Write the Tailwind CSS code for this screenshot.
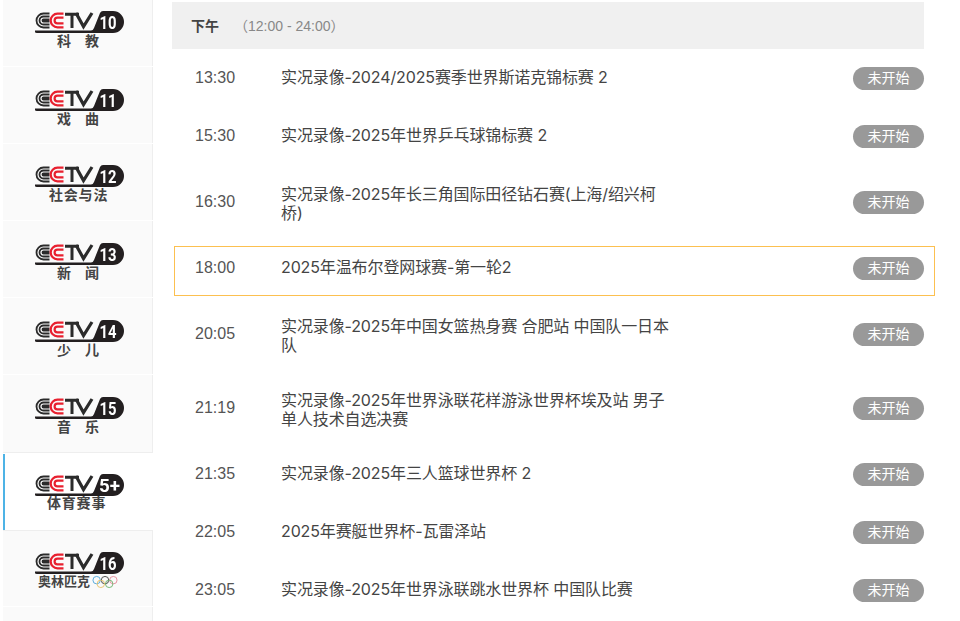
<!doctype html>
<html>
<head>
  <meta charset="UTF-8">
  <meta name="viewport" content="width=device-width, initial-scale=1.0">
  <script src="https://cdn.jsdelivr.net/npm/@tailwindcss/browser@4"></script>
  <title>CCTV 节目单</title>
</head>
<body class="bg-white font-['Liberation_Sans','Noto_Sans_CJK_SC',sans-serif]">
  <svg class="hidden" width="0" height="0">
    <symbol id="cctv" viewBox="0 0 90 22">
      <g fill="none" stroke="#2b2b2b" stroke-width="1.8">
        <path d="M14.5 2.5H8.5A7 7 0 0 0 8.5 16.5H14.5"/>
        <path d="M14.5 5.5H8.5A4 4 0 0 0 8.5 13.5H14.5"/>
        <path d="M14.5 8.5H8.5A1 1 0 0 0 8.5 10.5H14.5"/>
      </g>
      <g fill="none" stroke="#e8202f" stroke-width="2.2">
        <path d="M28.5 2.7H22.5A6.8 6.8 0 0 0 22.5 16.3H28.5"/>
        <path d="M28.5 6.6H22.5A2.9 2.9 0 0 0 22.5 12.4H28.5"/>
      </g>
      <path d="M30 3.2H44M37 3.2V17" fill="none" stroke="#2b2b2b" stroke-width="3"/>
      <path d="M41 2L48.5 15.5L57 2" fill="none" stroke="#2b2b2b" stroke-width="3.2"/>
      <path d="M0 19.5H56Q58 19.5 59 17L65 2Q66 0 68 0H78A11 11 0 0 1 78 22H2Q0 22 0 21Z" fill="#231f20"/>
    </symbol>
  </svg>

  <div class="flex h-[621px] w-[960px] overflow-hidden">
    <!-- channel list -->
    <aside class="-mt-[10px] ml-[3px] w-[150px] shrink-0 text-[#444]">
      <a class="mb-px block h-[76px] border-r border-[#eee] bg-[#fafafa] pt-[21px]">
        <svg class="ml-[32px] block h-[22px] w-[90px] blur-[.3px]"><use href="#cctv"/><text x="73" y="17.5" text-anchor="middle" fill="#fff" font-size="18" font-weight="700" font-family="Roboto" textLength="17" lengthAdjust="spacingAndGlyphs">10</text></svg>
        <p class="mt-px ml-[54px] flex gap-[14px] text-[14px] leading-[15px] font-bold"><span>科</span><span>教</span></p>
      </a>
      <a class="mb-px block h-[76px] border-r border-[#eee] bg-[#fafafa] pt-[22px]">
        <svg class="ml-[32px] block h-[22px] w-[90px] blur-[.3px]"><use href="#cctv"/><text x="73" y="17.5" text-anchor="middle" fill="#fff" font-size="18" font-weight="700" font-family="Roboto" textLength="17" lengthAdjust="spacingAndGlyphs">11</text></svg>
        <p class="mt-px ml-[54px] flex gap-[14px] text-[14px] leading-[15px] font-bold"><span>戏</span><span>曲</span></p>
      </a>
      <a class="mb-px block h-[76px] border-r border-[#eee] bg-[#fafafa] pt-[21px]">
        <svg class="ml-[32px] block h-[22px] w-[90px] blur-[.3px]"><use href="#cctv"/><text x="73" y="17.5" text-anchor="middle" fill="#fff" font-size="18" font-weight="700" font-family="Roboto" textLength="17" lengthAdjust="spacingAndGlyphs">12</text></svg>
        <p class="mt-px ml-[46px] flex text-[14px] leading-[15px] tracking-[.8px] font-bold">社会与法</p>
      </a>
      <a class="mb-px block h-[76px] border-r border-[#eee] bg-[#fafafa] pt-[22px]">
        <svg class="ml-[32px] block h-[22px] w-[90px] blur-[.3px]"><use href="#cctv"/><text x="73" y="17.5" text-anchor="middle" fill="#fff" font-size="18" font-weight="700" font-family="Roboto" textLength="17" lengthAdjust="spacingAndGlyphs">13</text></svg>
        <p class="mt-px ml-[54px] flex gap-[14px] text-[14px] leading-[15px] font-bold"><span>新</span><span>闻</span></p>
      </a>
      <a class="mb-px block h-[76px] border-r border-[#eee] bg-[#fafafa] pt-[22px]">
        <svg class="ml-[32px] block h-[22px] w-[90px] blur-[.3px]"><use href="#cctv"/><text x="73" y="17.5" text-anchor="middle" fill="#fff" font-size="18" font-weight="700" font-family="Roboto" textLength="17" lengthAdjust="spacingAndGlyphs">14</text></svg>
        <p class="mt-px ml-[54px] flex gap-[14px] text-[14px] leading-[15px] font-bold"><span>少</span><span>儿</span></p>
      </a>
      <a class="mb-px block h-[78px] border-r border-b border-[#eee] bg-[#fafafa] pt-[22px]">
        <svg class="ml-[32px] block h-[22px] w-[90px] blur-[.3px]"><use href="#cctv"/><text x="73" y="17.5" text-anchor="middle" fill="#fff" font-size="18" font-weight="700" font-family="Roboto" textLength="17" lengthAdjust="spacingAndGlyphs">15</text></svg>
        <p class="mt-px ml-[54px] flex gap-[14px] text-[14px] leading-[15px] font-bold"><span>音</span><span>乐</span></p>
      </a>
      <a class="block h-[76px] border-l-2 border-[#4db3e6] bg-white pt-[20px]">
        <svg class="ml-[30px] block h-[22px] w-[90px] blur-[.3px]"><use href="#cctv"/><text x="74.5" y="17.5" text-anchor="middle" fill="#fff" font-size="18" font-weight="700" font-family="Roboto" textLength="21" lengthAdjust="spacingAndGlyphs">5+</text></svg>
        <p class="ml-[42px] flex text-[14px] leading-[15px] tracking-[.8px] font-bold">体育赛事</p>
      </a>
      <a class="mb-px block h-[76px] border-t border-r border-[#eee] bg-[#fafafa] pt-[21px]">
        <svg class="ml-[32px] block h-[22px] w-[90px] blur-[.3px]"><use href="#cctv"/><text x="73" y="17.5" text-anchor="middle" fill="#fff" font-size="18" font-weight="700" font-family="Roboto" textLength="17" lengthAdjust="spacingAndGlyphs">16</text></svg>
        <div class="ml-[35px] flex items-center text-[13px] leading-[15px] font-bold">
          <span>奥林匹克</span>
          <svg class="ml-[2px] h-[14px] w-[26px]" viewBox="0 0 28 14" fill="none" stroke-width="1"><circle cx="5" cy="5" r="4" stroke="#4fa8dc"/><circle cx="14" cy="5" r="4" stroke="#444"/><circle cx="23" cy="5" r="4" stroke="#e58a9a"/><circle cx="9.5" cy="9" r="4" stroke="#e9c46a"/><circle cx="18.5" cy="9" r="4" stroke="#6fb36f"/></svg>
        </div>
      </a>
      <a class="block h-[76px] border-r border-[#eee] bg-[#fafafa]"></a>
    </aside>

    <!-- schedule -->
    <main class="ml-[19px] min-w-0 flex-1 pt-[2px]">
      <div class="mr-[36px] flex h-[47px] items-center bg-[#f0f0f0] pt-px pl-[19px] text-[14px]">
        <b class="w-[43px] text-[#444]">下午</b>
        <span class="text-[#888]">（12:00 - 24:00）</span>
      </div>
      <ul class="mt-[7px] ml-[2px] mr-[25px] text-[16px] leading-[19px] text-[#444]">
        <li class="mb-2 h-[50px] border border-transparent pt-[10px] pl-[20px] pr-[10px]">
          <div class="flex items-center"><span class="w-[86px] shrink-0 pb-[2px] text-[#555]">13:30</span><p class="w-[392px] pb-[2px] tracking-[-.12px] font-['Inter','Noto_Sans_CJK_SC',sans-serif]">实况录像-2024/2025赛季世界斯诺克锦标赛 2</p><span class="ml-auto flex h-[23px] w-[71px] items-center justify-center rounded-full bg-[#999] text-[14px] text-white">未开始</span></div>
        </li>
        <li class="mb-2 h-[50px] border border-transparent pt-[10px] pl-[20px] pr-[10px]">
          <div class="flex items-center"><span class="w-[86px] shrink-0 pb-[2px] text-[#555]">15:30</span><p class="w-[392px] pb-[2px] tracking-[-.12px] font-['Inter','Noto_Sans_CJK_SC',sans-serif]">实况录像-2025年世界乒乓球锦标赛 2</p><span class="ml-auto flex h-[23px] w-[71px] items-center justify-center rounded-full bg-[#999] text-[14px] text-white">未开始</span></div>
        </li>
        <li class="mb-2 h-[66px] border border-transparent pt-[10px] pl-[20px] pr-[10px]">
          <div class="flex items-center"><span class="w-[86px] shrink-0 pb-[2px] text-[#555]">16:30</span><p class="w-[392px] translate-y-[2px] tracking-[-.12px] font-['Inter','Noto_Sans_CJK_SC',sans-serif]">实况录像-2025年长三角国际田径钻石赛(上海/绍兴柯桥)</p><span class="ml-auto flex h-[23px] w-[71px] items-center justify-center rounded-full bg-[#999] text-[14px] text-white">未开始</span></div>
        </li>
        <li class="mb-2 h-[50px] border border-[#fcc050] pt-[10px] pl-[20px] pr-[10px]">
          <div class="flex items-center"><span class="w-[86px] shrink-0 pb-[2px] text-[#555]">18:00</span><p class="w-[392px] pb-[2px] tracking-[-.12px] font-['Inter','Noto_Sans_CJK_SC',sans-serif]">2025年温布尔登网球赛-第一轮2</p><span class="ml-auto flex h-[23px] w-[71px] items-center justify-center rounded-full bg-[#999] text-[14px] text-white">未开始</span></div>
        </li>
        <li class="mb-2 h-[66px] border border-transparent pt-[10px] pl-[20px] pr-[10px]">
          <div class="flex items-center"><span class="w-[86px] shrink-0 pb-[2px] text-[#555]">20:05</span><p class="w-[392px] translate-y-[2px] tracking-[-.12px] font-['Inter','Noto_Sans_CJK_SC',sans-serif]">实况录像-2025年中国女篮热身赛 合肥站 中国队一日本队</p><span class="ml-auto flex h-[23px] w-[71px] items-center justify-center rounded-full bg-[#999] text-[14px] text-white">未开始</span></div>
        </li>
        <li class="mb-2 h-[66px] border border-transparent pt-[10px] pl-[20px] pr-[10px]">
          <div class="flex items-center"><span class="w-[86px] shrink-0 pb-[2px] text-[#555]">21:19</span><p class="w-[392px] translate-y-[2px] tracking-[-.12px] font-['Inter','Noto_Sans_CJK_SC',sans-serif]">实况录像-2025年世界泳联花样游泳世界杯埃及站 男子单人技术自选决赛</p><span class="ml-auto flex h-[23px] w-[71px] items-center justify-center rounded-full bg-[#999] text-[14px] text-white">未开始</span></div>
        </li>
        <li class="mb-2 h-[50px] border border-transparent pt-[10px] pl-[20px] pr-[10px]">
          <div class="flex items-center"><span class="w-[86px] shrink-0 pb-[2px] text-[#555]">21:35</span><p class="w-[392px] pb-[2px] tracking-[-.12px] font-['Inter','Noto_Sans_CJK_SC',sans-serif]">实况录像-2025年三人篮球世界杯 2</p><span class="ml-auto flex h-[23px] w-[71px] items-center justify-center rounded-full bg-[#999] text-[14px] text-white">未开始</span></div>
        </li>
        <li class="mb-2 h-[50px] border border-transparent pt-[10px] pl-[20px] pr-[10px]">
          <div class="flex items-center"><span class="w-[86px] shrink-0 pb-[2px] text-[#555]">22:05</span><p class="w-[392px] pb-[2px] tracking-[-.12px] font-['Inter','Noto_Sans_CJK_SC',sans-serif]">2025年赛艇世界杯-瓦雷泽站</p><span class="ml-auto flex h-[23px] w-[71px] items-center justify-center rounded-full bg-[#999] text-[14px] text-white">未开始</span></div>
        </li>
        <li class="mb-2 h-[50px] border border-transparent pt-[10px] pl-[20px] pr-[10px]">
          <div class="flex items-center"><span class="w-[86px] shrink-0 pb-[2px] text-[#555]">23:05</span><p class="w-[392px] pb-[2px] tracking-[-.12px] font-['Inter','Noto_Sans_CJK_SC',sans-serif]">实况录像-2025年世界泳联跳水世界杯 中国队比赛</p><span class="ml-auto flex h-[23px] w-[71px] items-center justify-center rounded-full bg-[#999] text-[14px] text-white">未开始</span></div>
        </li>
      </ul>
    </main>
  </div>
</body>
</html>
